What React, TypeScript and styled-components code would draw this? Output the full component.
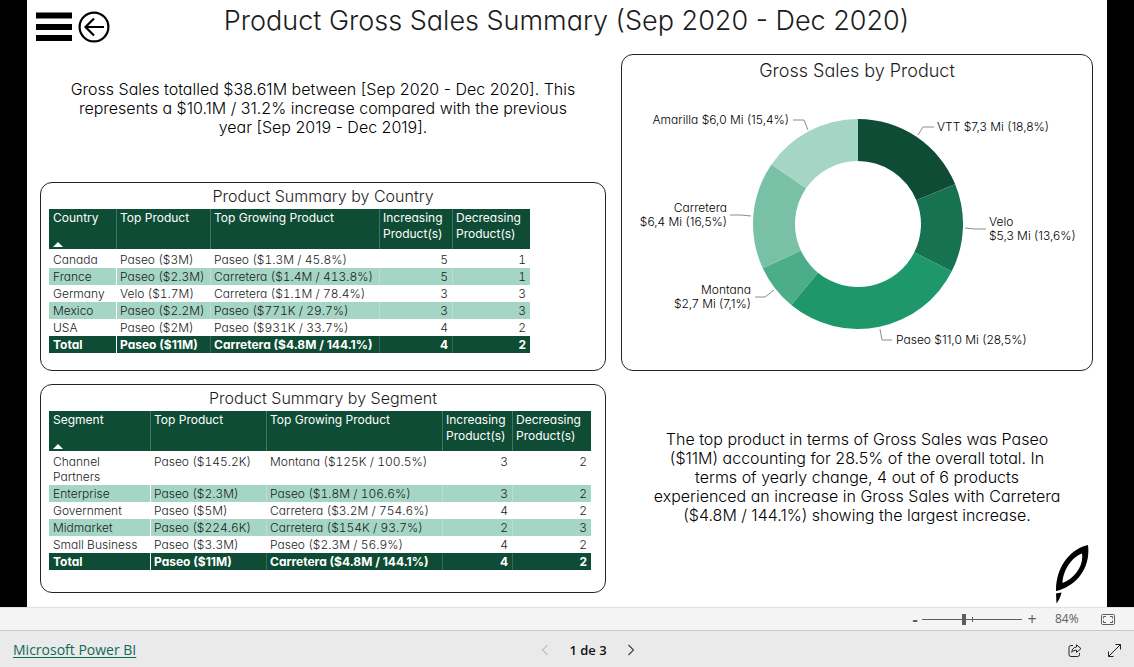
import React from "react";
import styled, { createGlobalStyle } from "styled-components";

const GlobalStyle = createGlobalStyle`
  *, *::before, *::after { box-sizing: border-box; }
  body { margin: 0; background: #000; }
  button { border: 0; padding: 0; background: none; color: inherit; font: inherit; cursor: pointer; }
  h1, h2, p { margin: 0; font-weight: 300; }
`;

const display = `Inter, "Century Gothic", sans-serif`;
const ui = `"Open Sans", "Segoe UI", sans-serif`;

const Viewer = styled.div`
  min-height: 100vh;
  display: flex;
  flex-direction: column;
`;

const Stage = styled.main`
  flex: 1;
  display: flex;
  padding: 0 27px;
  background: #000;
`;

const Page = styled.article`
  flex: 1;
  padding: 0 14px 14px 13px;
  background: #fff;
  color: #1c1c1c;
  font-family: ${display};
  font-weight: 300;
  font-feature-settings: "cv11";
`;

const Header = styled.header`
  height: 54px;
  display: grid;
  grid-template-columns: 1fr auto 1fr;
`;

const HeaderTools = styled.div`
  display: flex;
  align-items: center;
  gap: 6px;
  margin-left: -4px;
`;

const IconButton = styled.button`
  display: flex;
`;

const Title = styled.h1`
  font-size: 27px;
  line-height: 42px;
  white-space: nowrap;
`;

const Columns = styled.div`
  display: grid;
  grid-template-columns: 566fr 472fr;
  gap: 15px;
`;

const Column = styled.div`
  display: flex;
  flex-direction: column;
`;

const Narrative = styled.p<{ $top: number; $height: number }>`
  min-height: ${(p) => p.$height}px;
  padding-top: ${(p) => p.$top}px;
  font-size: 16px;
  line-height: 19px;
  text-align: center;
  color: #000;
`;

const Panel = styled.section<{ $height: number }>`
  min-height: ${(p) => p.$height}px;
  border: 1px solid #252525;
  border-radius: 12px;
  & + & { margin-top: 13px; }
`;

const PanelTitle = styled.h2<{ $large?: boolean }>`
  font-size: ${(p) => (p.$large ? 18 : 16)}px;
  line-height: ${(p) => (p.$large ? 31 : 26)}px;
  text-align: center;
`;

const Table = styled.table<{ $width: number }>`
  width: ${(p) => p.$width}px;
  margin-left: 8px;
  table-layout: fixed;
  border-collapse: separate;
  border-spacing: 0;
  font-size: 12px;
  line-height: 15px;
`;

const HeadCell = styled.th`
  height: 40px;
  padding: 1px 0 0 3px;
  background: #0f4c35;
  color: #fff;
  font-weight: 400;
  line-height: 16px;
  text-align: left;
  vertical-align: top;
  border-left: 1px solid #477461;
  &:first-child { border-left: 0; padding-left: 4px; }
`;

const SortArrow = styled.svg`
  display: block;
  margin-top: 16px;
`;

const Cell = styled.td<{ $number?: boolean }>`
  height: 17px;
  padding: 1px 4px 1px 3px;
  vertical-align: top;
  white-space: nowrap;
  text-align: ${(p) => (p.$number ? "right" : "left")};
  border-left: 1px solid transparent;
  &:first-child { border-left: 0; padding-left: 4px; padding-right: 0; }
`;

const Row = styled.tr<{ $band?: boolean }>`
  font-variant-numeric: tabular-nums;
  & > td {
    background: ${(p) => (p.$band ? "#a5d6c5" : "#fff")};
    border-left-color: ${(p) => (p.$band ? "#b9dfd2" : "#fff")};
  }
  & > td:nth-child(2) { border-left-color: #fff; }
`;

const Spacer = styled.tr`
  height: 2px;
  & > td { padding: 0; }
`;

const TotalRow = styled.tr`
  color: #fff;
  font-weight: 700;
  & > td { background: #0f4c35; border-left-color: #376955; }
  & > td:nth-child(2) { border-left-color: #fff; }
`;

type Summary = {
  label: string;
  widths: number[];
  rows: string[][];
  total: string[];
};

const byCountry: Summary = {
  label: "Country",
  widths: [67, 94, 169, 73, 78],
  rows: [
    ["Canada", "Paseo ($3M)", "Paseo ($1.3M / 45.8%)", "5", "1"],
    ["France", "Paseo ($2.3M)", "Carretera ($1.4M / 413.8%)", "5", "1"],
    ["Germany", "Velo ($1.7M)", "Carretera ($1.1M / 78.4%)", "3", "3"],
    ["Mexico", "Paseo ($2.2M)", "Paseo ($771K / 29.7%)", "3", "3"],
    ["USA", "Paseo ($2M)", "Paseo ($931K / 33.7%)", "4", "2"],
  ],
  total: ["Total", "Paseo ($11M)", "Carretera ($4.8M / 144.1%)", "4", "2"],
};

const bySegment: Summary = {
  label: "Segment",
  widths: [101, 116, 176, 70, 79],
  rows: [
    ["Channel Partners", "Paseo ($145.2K)", "Montana ($125K / 100.5%)", "3", "2"],
    ["Enterprise", "Paseo ($2.3M)", "Paseo ($1.8M / 106.6%)", "3", "2"],
    ["Government", "Paseo ($5M)", "Carretera ($3.2M / 754.6%)", "4", "2"],
    ["Midmarket", "Paseo ($224.6K)", "Carretera ($154K / 93.7%)", "2", "3"],
    ["Small Business", "Paseo ($3.3M)", "Paseo ($2.3M / 56.9%)", "4", "2"],
  ],
  total: ["Total", "Paseo ($11M)", "Carretera ($4.8M / 144.1%)", "4", "2"],
};

function SummaryTable({ data }: { data: Summary }) {
  return (
    <Table $width={data.widths.reduce((a, b) => a + b, 0)}>
      <colgroup>
        {data.widths.map((w, i) => (
          <col key={i} width={w} />
        ))}
      </colgroup>
      <thead>
        <tr>
          <HeadCell scope="col" aria-sort="ascending">
            {data.label}
            <SortArrow width="10" height="5" aria-hidden="true">
              <path d="M0 5 5 0l5 5z" fill="#fff" />
            </SortArrow>
          </HeadCell>
          <HeadCell scope="col">Top Product</HeadCell>
          <HeadCell scope="col">Top Growing Product</HeadCell>
          <HeadCell scope="col">Increasing Product(s)</HeadCell>
          <HeadCell scope="col">Decreasing Product(s)</HeadCell>
        </tr>
      </thead>
      <tbody>
        <Spacer aria-hidden="true">
          <td colSpan={5} />
        </Spacer>
        {data.rows.map((row, r) => (
          <Row key={row[0]} $band={r % 2 === 1}>
            {row.map((value, c) => (
              <Cell key={c} $number={c > 2}>
                {value === "Channel Partners" ? (
                  <>
                    Channel
                    <br />
                    Partners
                  </>
                ) : (
                  value
                )}
              </Cell>
            ))}
          </Row>
        ))}
      </tbody>
      <tfoot>
        <TotalRow>
          {data.total.map((value, c) => (
            <Cell key={c} $number={c > 2}>
              {value}
            </Cell>
          ))}
        </TotalRow>
      </tfoot>
    </Table>
  );
}

const Chart = styled.svg`
  display: block;
  width: 100%;
  font-size: 12px;
  fill: #000;
`;

type Slice = {
  name: string;
  share: number;
  color: string;
  leader: string;
  x: number;
  y: number;
  anchor: "start" | "end";
  lines: string[];
};

const slices: Slice[] = [
  { name: "VTT", share: 18.8, color: "#0f4c35", leader: "296,49 301,41 312,41", x: 315, y: 45, anchor: "start", lines: ["VTT $7,3 Mi (18,8%)"] },
  { name: "Velo", share: 13.6, color: "#167250", leader: "343,142 353,143 364,143", x: 367, y: 140, anchor: "start", lines: ["Velo", "$5,3 Mi (13,6%)"] },
  { name: "Paseo", share: 28.5, color: "#1e986b", leader: "258,243 260,254 270,254", x: 274, y: 258, anchor: "start", lines: ["Paseo $11,0 Mi (28,5%)"] },
  { name: "Montana", share: 7.1, color: "#4bad89", leader: "152,204 143,211 133,211", x: 129, y: 208, anchor: "end", lines: ["Montana", "$2,7 Mi (7,1%)"] },
  { name: "Carretera", share: 16.5, color: "#78c1a6", leader: "129,130 119,129 108,129", x: 105, y: 126, anchor: "end", lines: ["Carretera", "$6,4 Mi (16,5%)"] },
  { name: "Amarilla", share: 15.4, color: "#a5d6c5", leader: "186,44 182,34 171,34", x: 167, y: 38, anchor: "end", lines: ["Amarilla $6,0 Mi (15,4%)"] },
];

const CENTER = { x: 236, y: 138 };

function point(radius: number, turn: number) {
  const a = turn * 2 * Math.PI;
  return `${(CENTER.x + radius * Math.sin(a)).toFixed(2)} ${(CENTER.y - radius * Math.cos(a)).toFixed(2)}`;
}

function Donut() {
  const sum = slices.reduce((a, s) => a + s.share, 0);
  let start = 0;
  return (
    <Chart viewBox="0 0 470 284" role="img" aria-label="Gross Sales by Product">
      {slices.map((s) => {
        const from = start;
        const to = start + s.share / sum;
        start = to;
        return (
          <g key={s.name}>
            <path
              d={`M${point(105, from)}A105 105 0 0 1 ${point(105, to)}L${point(63, to)}A63 63 0 0 0 ${point(63, from)}Z`}
              fill={s.color}
            />
            <polyline points={s.leader} fill="none" stroke="#8c8c8c" />
            {s.lines.map((line, i) => (
              <text key={line} x={s.x} y={s.y + i * 14} textAnchor={s.anchor}>
                {line}
              </text>
            ))}
          </g>
        );
      })}
    </Chart>
  );
}

const Feather = styled.svg`
  display: block;
  margin: auto 4px -11px auto;
`;

const ZoomBar = styled.div`
  height: 23px;
  display: flex;
  align-items: center;
  justify-content: flex-end;
  padding-right: 19px;
  border-top: 1px solid #e0e0e0;
  background: #f4f4f4;
  color: #605e5c;
  font: 12px/16px ${ui};
`;

const ZoomButton = styled.button`
  width: 14px;
  height: 16px;
  font-size: 16px;
  line-height: 16px;
`;

const ZoomOut = styled(ZoomButton)`
  width: 8px;
  font-weight: 700;
`;

const SliderBox = styled.div`
  position: relative;
  display: flex;
  width: 100px;
  margin: 0 3px;
  &::after {
    content: "";
    position: absolute;
    left: 50px;
    top: 3px;
    width: 1px;
    height: 5px;
    background: #605e5c;
  }
`;

const Slider = styled.input`
  appearance: none;
  width: 100%;
  height: 11px;
  margin: 0;
  background: linear-gradient(#605e5c, #605e5c) center / 100% 1px no-repeat;
  &::-webkit-slider-thumb {
    appearance: none;
    width: 4px;
    height: 11px;
    background: #605e5c;
  }
`;

const ZoomValue = styled.output`
  width: 25px;
  margin: 0 21px 0 16px;
`;

const Footer = styled.footer`
  height: 37px;
  display: grid;
  grid-template-columns: 1fr auto 1fr;
  align-items: center;
  padding: 2px 13px 0;
  border-top: 1px solid #c8c8c8;
  background: #eaeaea;
  color: #111;
  font: 14px/20px ${ui};
`;

const BrandLink = styled.a`
  justify-self: start;
  color: #0b6a57;
  text-underline-offset: 2px;
`;

const Pager = styled.nav`
  display: flex;
  align-items: center;
  gap: 20px;
  margin-left: 42px;
  font-size: 13px;
  font-weight: 600;
`;

const Actions = styled.div`
  display: flex;
  align-items: center;
  justify-content: flex-end;
  gap: 26px;
`;

export default function App() {
  return (
    <Viewer>
      <GlobalStyle />
      <Stage>
        <Page>
          <Header>
            <HeaderTools>
              <IconButton aria-label="Menu">
                <svg width="36" height="30" viewBox="0 0 36 30">
                  <path d="M0 .5h36v6H0zM0 12h36v6H0zM0 23h36v6H0z" />
                </svg>
              </IconButton>
              <IconButton aria-label="Back">
                <svg width="32" height="32" viewBox="0 0 32 32" fill="none" stroke="#000" strokeWidth="2.2">
                  <circle cx="16" cy="16" r="14.4" />
                  <path d="M26 16H7.500M16 7.500 7.500 16l8.500 8.500" />
                </svg>
              </IconButton>
            </HeaderTools>
            <Title>Product Gross Sales Summary (Sep 2020 - Dec 2020)</Title>
          </Header>
          <Columns>
            <Column>
              <Narrative $top={26} $height={128}>
                Gross Sales totalled $38.61M between [Sep 2020 - Dec 2020]. This
                <br />
                represents a $10.1M / 31.2% increase compared with the previous
                <br />
                year [Sep 2019 - Dec 2019].
              </Narrative>
              <Panel $height={189}>
                <PanelTitle>Product Summary by Country</PanelTitle>
                <SummaryTable data={byCountry} />
              </Panel>
              <Panel $height={209}>
                <PanelTitle>Product Summary by Segment</PanelTitle>
                <SummaryTable data={bySegment} />
              </Panel>
            </Column>
            <Column>
              <Panel $height={317}>
                <PanelTitle $large>Gross Sales by Product</PanelTitle>
                <Donut />
              </Panel>
              <Narrative $top={59} $height={154}>
                The top product in terms of Gross Sales was Paseo
                <br />
                ($11M) accounting for 28.5% of the overall total. In
                <br />
                terms of yearly change, 4 out of 6 products
                <br />
                experienced an increase in Gross Sales with Carretera
                <br />
                ($4.8M / 144.1%) showing the largest increase.
              </Narrative>
              <Feather width="34" height="60" viewBox="0 0 34 60" aria-hidden="true">
                <path
                  fillRule="evenodd"
                  d="M33 1C18 4 1 20 1 47C20 43 36 25 33 1ZM27 9.500C29 22 19 35 7.500 39C8 26 17 13 27 9.500Z"
                />
                <path d="M1 49.500 6.500 48.500C5.500 53 3.500 57 1.500 59.500Z" />
              </Feather>
            </Column>
          </Columns>
        </Page>
      </Stage>
      <ZoomBar>
        <ZoomOut aria-label="Zoom out">-</ZoomOut>
        <SliderBox>
          <Slider type="range" min={0} max={100} defaultValue={42} aria-label="Zoom" />
        </SliderBox>
        <ZoomButton aria-label="Zoom in">+</ZoomButton>
        <ZoomValue>84%</ZoomValue>
        <IconButton aria-label="Fit to page">
          <svg width="14" height="11" viewBox="0 0 14 11" fill="none" stroke="#605e5c">
            <rect x=".5" y=".5" width="13" height="10" rx="1" />
            <path d="M5 2.500H2.500V4.500M9 2.500h2.500V4.500M5 8.500H2.500V6.500M9 8.500h2.500V6.500" />
          </svg>
        </IconButton>
      </ZoomBar>
      <Footer>
        <BrandLink href="#power-bi">Microsoft Power BI</BrandLink>
        <Pager aria-label="Pages">
          <IconButton aria-label="Previous page" disabled>
            <svg width="8" height="12" viewBox="0 0 8 12" fill="none" stroke="#c0c0c0" strokeWidth="1.2">
              <path d="M6.500 1 1.500 6l5 5" />
            </svg>
          </IconButton>
          <span>1 de 3</span>
          <IconButton aria-label="Next page">
            <svg width="8" height="12" viewBox="0 0 8 12" fill="none" stroke="#444" strokeWidth="1.2">
              <path d="M1.500 1l5 5-5 5" />
            </svg>
          </IconButton>
        </Pager>
        <Actions>
          <IconButton aria-label="Share">
            <svg width="14" height="13" viewBox="0 0 14 13" fill="none" stroke="#222" strokeLinejoin="round">
              <path d="M5 1.500H3A2 2 0 0 0 1 3.500v7a2 2 0 0 0 2 2h6.500a2 2 0 0 0 2-2V9" />
              <path d="M8.500.8 13 4.600 8.500 8.400V6.300C6.500 6.200 5 6.800 3.800 8.300 4 5.300 5.700 3.200 8.500 3z" />
            </svg>
          </IconButton>
          <IconButton aria-label="Full screen">
            <svg width="13" height="13" viewBox="0 0 13 13" fill="none" stroke="#222">
              <path d="M.7 12.300 12.300.7M7.500.5h5v5M.5 7.500v5h5" />
            </svg>
          </IconButton>
        </Actions>
      </Footer>
    </Viewer>
  );
}
